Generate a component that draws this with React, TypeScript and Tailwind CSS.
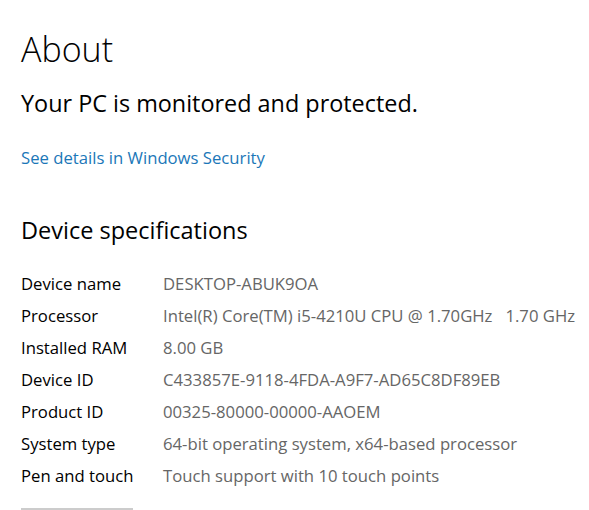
const specs: [string, string][] = [
  ["Device name", "DESKTOP-ABUK9OA"],
  ["Processor", "Intel(R) Core(TM) i5-4210U CPU @ 1.70GHz   1.70 GHz"],
  ["Installed RAM", "8.00 GB"],
  ["Device ID", "C433857E-9118-4FDA-A9F7-AD65C8DF89EB"],
  ["Product ID", "00325-80000-00000-AAOEM"],
  ["System type", "64-bit operating system, x64-based processor"],
  ["Pen and touch", "Touch support with 10 touch points"],
];

export default function App() {
  return (
    <div className="h-[510px] w-[589px] overflow-hidden bg-white pl-[21px] font-['Open_Sans',sans-serif] text-black">
      <h1 className="mt-[29px] h-[40px] text-[34px] font-light leading-[40px]">About</h1>
      <p className="mt-[18px] h-[32px] text-[23.4px] leading-[32px]">Your PC is monitored and protected.</p>
      <a href="#" className="mt-[26px] block h-[26px] text-[16.7px] leading-[26px] text-[#1b77b8]">
        See details in Windows Security
      </a>
      <h2 className="mt-[43px] h-[32px] text-[23.5px] leading-[32px]">Device specifications</h2>
      <div className="mt-[22px] flex flex-col">
        {specs.map(([label, value]) => (
          <div key={label} className="flex h-[32px] items-center text-[16.7px] leading-[32px]">
            <span className="w-[142px] shrink-0">{label}</span>
            <span className="whitespace-pre text-[#666666]">{value}</span>
          </div>
        ))}
      </div>
      <div className="mt-[16px] h-[2px] w-[112px] bg-[#cccccc]" />
    </div>
  );
}
